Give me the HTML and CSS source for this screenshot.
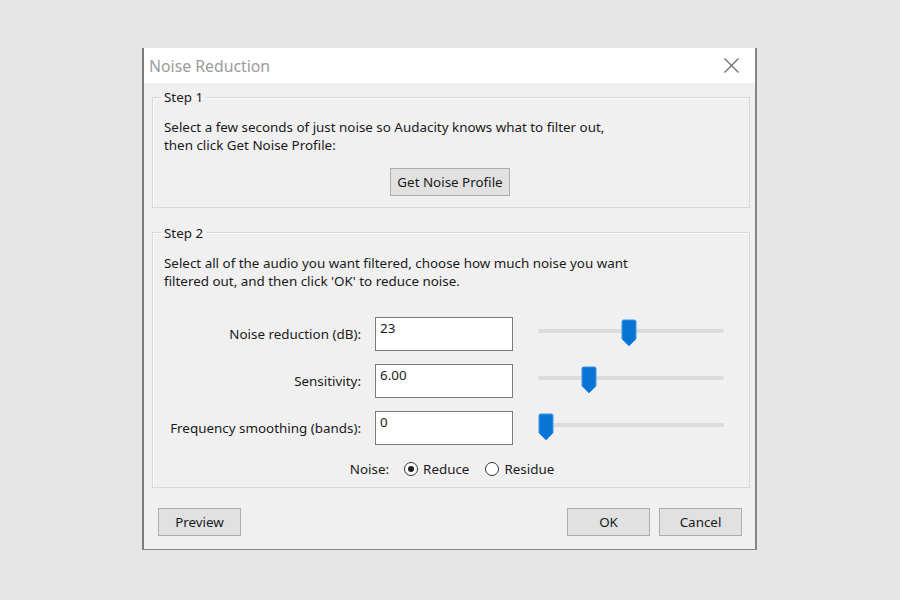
FILE: index.html
```html
<!DOCTYPE html>
<html>
<head>
<meta charset="utf-8">
<link rel="stylesheet" href="styles.css">
</head>
<body>
<div class="dialog">
  <div class="titlebar">
    <span class="title">Noise Reduction</span>
    <svg class="close" width="15" height="15" viewBox="0 0 15 15"><path d="M0.5 0.5 L14.5 14.5 M14.5 0.5 L0.5 14.5" stroke="#666" stroke-width="1.1" fill="none"/></svg>
  </div>
  <div class="content">
    <fieldset class="group group1">
      <legend>Step 1</legend>
      <p class="desc">Select a few seconds of just noise so Audacity knows what to filter out,<br>then click Get Noise Profile:</p>
      <div class="center"><button class="btn btn-profile">Get Noise Profile</button></div>
    </fieldset>
    <fieldset class="group group2">
      <legend>Step 2</legend>
      <p class="desc">Select all of the audio you want filtered, choose how much noise you want<br>filtered out, and then click 'OK' to reduce noise.</p>
      <div class="rows">
        <div class="row">
          <label class="lbl">Noise reduction (dB):</label>
          <div class="field">23</div>
          <div class="slider"><div class="track"></div><svg class="thumb" style="left:83px" width="16" height="28" viewBox="0 0 16 28"><path d="M1 2.5 Q1 1 2.5 1 H13.5 Q15 1 15 2.5 V20 L8 27 L1 20 Z" fill="#0a74d4" stroke="#3d96e6" stroke-width="1"/></svg></div>
        </div>
        <div class="row">
          <label class="lbl">Sensitivity:</label>
          <div class="field">6.00</div>
          <div class="slider"><div class="track"></div><svg class="thumb" style="left:43px" width="16" height="28" viewBox="0 0 16 28"><path d="M1 2.5 Q1 1 2.5 1 H13.5 Q15 1 15 2.5 V20 L8 27 L1 20 Z" fill="#0a74d4" stroke="#3d96e6" stroke-width="1"/></svg></div>
        </div>
        <div class="row">
          <label class="lbl">Frequency smoothing (bands):</label>
          <div class="field">0</div>
          <div class="slider"><div class="track"></div><svg class="thumb" style="left:0px" width="16" height="28" viewBox="0 0 16 28"><path d="M1 2.5 Q1 1 2.5 1 H13.5 Q15 1 15 2.5 V20 L8 27 L1 20 Z" fill="#0a74d4" stroke="#3d96e6" stroke-width="1"/></svg></div>
        </div>
      </div>
      <div class="radios">
        <span class="noise-lbl">Noise:</span>
        <span class="radio checked"></span><span class="rtext">Reduce</span>
        <span class="radio"></span><span class="rtext">Residue</span>
      </div>
    </fieldset>
  </div>
  <div class="footer">
    <button class="btn btn-foot">Preview</button>
    <div class="spacer"></div>
    <button class="btn btn-foot">OK</button>
    <button class="btn btn-foot btn-cancel">Cancel</button>
  </div>
</div>
</body>
</html>
```
FILE: styles.css
```css
html, body {
  margin: 0;
  padding: 0;
}
body {
  width: 900px;
  height: 600px;
  background: #e6e6e6;
  font-family: "Noto Sans", "Open Sans", sans-serif;
  font-size: 13.4px;
  color: #1a1a1a;
  overflow: hidden;
}
.dialog {
  box-sizing: border-box;
  margin: 48px 0 0 142px;
  width: 615px;
  height: 502px;
  background: #f0f0f0;
  border-left: 2px solid #7c7c7c;
  border-right: 2px solid #858585;
  border-bottom: 1px solid #858585;
  display: flex;
  flex-direction: column;
}
.titlebar {
  height: 35px;
  background: #ffffff;
  display: flex;
  align-items: center;
  justify-content: space-between;
  padding: 0 16px 0 5px;
}
.title {
  font-size: 15.8px;
  color: #9b9b9b;
}
.close {
  display: block;
  margin-top: 0;
}
.content {
  padding: 6px 5px 0 8px;
}
.group {
  margin: 0;
  padding: 0 10px 0 11px;
  border: 1px solid #d8d8d8;
  box-shadow: inset 1px 1px 0 #fafafa;
  min-width: 0;
}
.group legend {
  padding: 0 3px;
  margin-left: -3px;
  line-height: 16px;
}
.desc {
  margin: 0;
  line-height: 18.3px;
}
.group1 {
  padding-top: 13px;
  padding-bottom: 11px;
}
.center {
  display: flex;
  justify-content: center;
  margin-top: 13.4px;
}
.btn {
  box-sizing: border-box;
  height: 28px;
  font-family: inherit;
  font-size: 13.4px;
  color: #1a1a1a;
  background: #e1e1e1;
  border: 1px solid #adadad;
  padding: 0;
}
.btn-profile {
  width: 120px;
  margin-left: -3px;
}
.group2 {
  margin-top: 17px;
  padding-top: 13px;
  padding-bottom: 10px;
}
.rows {
  margin-top: 26.4px;
  display: flex;
  flex-direction: column;
  gap: 13px;
}
.row {
  display: flex;
  height: 34px;
  align-items: flex-start;
}
.lbl {
  width: 197px;
  margin-right: 14px;
  text-align: right;
  line-height: 34px;
}
.field {
  box-sizing: border-box;
  width: 138px;
  height: 34px;
  background: #fff;
  border: 1px solid #7a7a7a;
  padding: 2px 4px;
  line-height: 16px;
}
.slider {
  position: relative;
  width: 186px;
  height: 34px;
  margin-left: 25px;
}
.track {
  margin-top: 12px;
  height: 4px;
  border-radius: 2px;
  background: #dcdcdc;
}
.thumb {
  position: absolute;
  top: 2px;
}
.radios {
  margin-top: 16px;
  height: 16px;
  display: flex;
  align-items: center;
  justify-content: center;
  padding-left: 1px;
}
.noise-lbl {
  margin-right: 15px;
}
.radio {
  box-sizing: border-box;
  width: 14px;
  height: 14px;
  border: 1px solid #333;
  border-radius: 50%;
  background: #fff;
  position: relative;
  margin-right: 5px;
}
.radio.checked::after {
  content: "";
  position: absolute;
  left: 3px;
  top: 3px;
  width: 6px;
  height: 6px;
  border-radius: 50%;
  background: #222;
}
.rtext {
  margin-right: 16px;
}
.rtext:last-child {
  margin-right: 0;
}
.footer {
  display: flex;
  padding: 20px 13px 0 14px;
}
.spacer {
  flex: 1;
}
.btn-foot {
  width: 83px;
}
.btn-cancel {
  margin-left: 9px;
}
```
